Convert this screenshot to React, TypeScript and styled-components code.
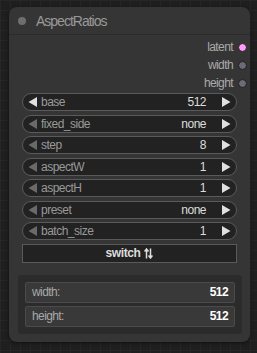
import styled, { createGlobalStyle } from "styled-components";

const GlobalStyle = createGlobalStyle`
  html, body {
    margin: 0;
    padding: 0;
    background-color: #1f1f1f;
    background-image:
      linear-gradient(to right, #262626 1px, transparent 1px),
      linear-gradient(to bottom, #262626 1px, transparent 1px);
    background-size: 10px 10px;
    font-family: "Liberation Sans", Arial, sans-serif;
  }
`;

const Canvas = styled.div`
  width: 257px;
  height: 353px;
  padding: 7px 0 0 9px;
  box-sizing: border-box;
`;

const Node = styled.div`
  width: 241px;
  height: 335px;
  background: #353535;
  border-radius: 8px;
  box-shadow: 0 1px 4px rgba(0, 0, 0, 0.5);
  display: flex;
  flex-direction: column;
  box-sizing: border-box;
`;

const TitleBar = styled.div`
  height: 27px;
  display: flex;
  align-items: center;
  padding-left: 9px;
  gap: 10px;
  border-bottom: 1px solid #2b2b2b;
`;

const TitleDot = styled.div`
  width: 8px;
  height: 8px;
  border-radius: 50%;
  background: #6e6e6e;
`;

const Title = styled.span`
  color: #999;
  font-size: 14px;
  letter-spacing: -1px;
`;

const Outputs = styled.div`
  display: flex;
  flex-direction: column;
  padding-top: 3px;
`;

const OutputRow = styled.div`
  height: 18px;
  display: flex;
  align-items: center;
  justify-content: flex-end;
  padding-right: 3px;
  gap: 5px;
  color: #aaa;
  font-size: 12px;
  letter-spacing: -0.6px;
`;

const SlotDot = styled.div<{ $color: string }>`
  width: 9px;
  height: 9px;
  box-sizing: border-box;
  flex-shrink: 0;
  border-radius: 50%;
  background: ${(p) => p.$color};
  border: 1px solid #1e1e1e;
`;

const Widgets = styled.div`
  display: flex;
  flex-direction: column;
  gap: 3.5px;
  padding: 1px 13px 0 13px;
`;

const Widget = styled.div`
  height: 18px;
  box-sizing: border-box;
  background: #222;
  border: 1px solid #5a5a5a;
  border-radius: 9px;
  display: flex;
  align-items: center;
  padding: 0 5px;
  font-size: 12px;
  letter-spacing: -0.5px;
`;

const Label = styled.span`
  color: #999;
  margin-left: 3px;
  flex: 1;
`;

const Value = styled.span`
  color: #ddd;
  margin-right: 15px;
`;

const Arrow = styled.svg<{ $dim?: boolean }>`
  width: 10px;
  height: 10px;
  fill: ${(p) => (p.$dim ? "#6a6a6a" : "#e0e0e0")};
  flex-shrink: 0;
`;

const SwitchButton = styled.div`
  height: 19px;
  box-sizing: border-box;
  background: #222;
  border: 1px solid #5a5a5a;
  display: flex;
  align-items: center;
  justify-content: center;
  color: #ddd;
  font-size: 12px;
  font-weight: bold;
  letter-spacing: -0.4px;
  gap: 4px;
`;

const SwitchIcon = styled.svg`
  width: 9px;
  height: 11px;
  stroke: #ddd;
  fill: none;
  stroke-width: 1.5;
`;

const ResultPanel = styled.div`
  margin: 12px 8px 0 9px;
  background: #2b2b2b;
  border-radius: 3px;
  padding: 7px 7px;
  display: flex;
  flex-direction: column;
  gap: 3px;
`;

const ResultRow = styled.div`
  height: 21px;
  box-sizing: border-box;
  background: #393939;
  border: 1px solid #4b4b4b;
  border-radius: 2px;
  display: flex;
  align-items: center;
  justify-content: space-between;
  padding: 0 6px;
  font-size: 12px;
  letter-spacing: -0.6px;
`;

const ResultLabel = styled.span`
  color: #a8a8a8;
`;

const ResultValue = styled.span`
  color: #fff;
  font-weight: bold;
`;

function LeftArrow({ dim }: { dim?: boolean }) {
  return (
    <Arrow $dim={dim} viewBox="0 0 10 10">
      <polygon points="9,0 9,10 0.5,5" />
    </Arrow>
  );
}

function RightArrow() {
  return (
    <Arrow viewBox="0 0 10 10">
      <polygon points="1,0 1,10 9.5,5" />
    </Arrow>
  );
}

const widgets = [
  { name: "base", value: "512", active: true },
  { name: "fixed_side", value: "none" },
  { name: "step", value: "8" },
  { name: "aspectW", value: "1" },
  { name: "aspectH", value: "1" },
  { name: "preset", value: "none" },
  { name: "batch_size", value: "1" },
];

const outputs = [
  { name: "latent", color: "#ff9cf9" },
  { name: "width", color: "#6b6b78" },
  { name: "height", color: "#6b6b78" },
];

export default function App() {
  return (
    <>
      <GlobalStyle />
      <Canvas>
        <Node>
          <TitleBar>
            <TitleDot />
            <Title>AspectRatios</Title>
          </TitleBar>
          <Outputs>
            {outputs.map((o) => (
              <OutputRow key={o.name}>
                {o.name}
                <SlotDot $color={o.color} />
              </OutputRow>
            ))}
          </Outputs>
          <Widgets>
            {widgets.map((w) => (
              <Widget key={w.name}>
                <LeftArrow dim={!w.active} />
                <Label>{w.name}</Label>
                <Value>{w.value}</Value>
                <RightArrow />
              </Widget>
            ))}
            <SwitchButton>
              switch
              <SwitchIcon viewBox="0 0 9 11">
                <path d="M2.5 10.5V1M0.5 3.5L2.5 1L4.5 3.5" />
                <path d="M6.5 0.5V10M4.5 7.5L6.5 10L8.5 7.5" />
              </SwitchIcon>
            </SwitchButton>
          </Widgets>
          <ResultPanel>
            <ResultRow>
              <ResultLabel>width:</ResultLabel>
              <ResultValue>512</ResultValue>
            </ResultRow>
            <ResultRow>
              <ResultLabel>height:</ResultLabel>
              <ResultValue>512</ResultValue>
            </ResultRow>
          </ResultPanel>
        </Node>
      </Canvas>
    </>
  );
}
